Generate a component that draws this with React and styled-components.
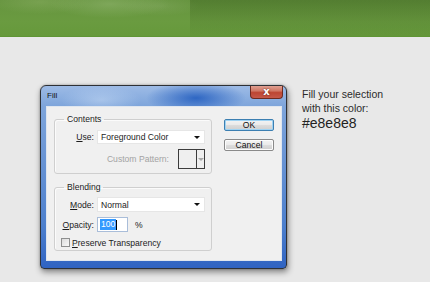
import React from "react";
import styled, { createGlobalStyle } from "styled-components";

const Global = createGlobalStyle`
  html, body { margin: 0; padding: 0; background: #e8e8e8; }
  body { font-family: "Liberation Sans", Arial, sans-serif; }
`;

const Page = styled.div`
  width: 430px;
  height: 282px;
  background: #e8e8e8;
  overflow: hidden;
`;

const Header = styled.div`
  height: 37px;
  border-bottom: 1px solid #5f9535;
  box-sizing: border-box;
  background:
    linear-gradient(to bottom, rgba(25, 55, 5, 0.24), rgba(25, 55, 5, 0.1) 60%, rgba(25, 55, 5, 0.03)) 190px 0 / 240px 100% no-repeat,
    radial-gradient(ellipse 60px 14px at 110px 4px, rgba(170, 200, 140, 0.35), transparent),
    radial-gradient(ellipse 50px 12px at 40px 2px, rgba(160, 190, 120, 0.3), transparent),
    radial-gradient(ellipse 40px 10px at 160px 6px, rgba(150, 180, 120, 0.25), transparent),
    linear-gradient(to bottom, #66943f 0%, #6a9b40 60%, #66993b 100%);
`;

const Stage = styled.div`
  display: flex;
  align-items: flex-start;
  padding: 48px 0 0 40px;
`;

const Window = styled.div`
  width: 247px;
  box-sizing: border-box;
  border: 1px solid #2e3136;
  border-radius: 6px 6px 4px 4px;
  padding: 0 4px 7px 5px;
  box-shadow: 1px 3px 6px rgba(0, 0, 0, 0.45), 0 0 2px rgba(0, 0, 0, 0.3);
  background:
    radial-gradient(ellipse 50px 16px at 155px 12px, rgba(30, 90, 190, 0.85), transparent),
    radial-gradient(ellipse 40px 14px at 60px 14px, rgba(200, 220, 245, 0.5), transparent),
    linear-gradient(to bottom, #9dbbe6 0px, #7ea5db 20px, #6e98d6 60px, #4c7fcd 140px, #2f63c2 100%);
`;

const TitleBar = styled.div`
  height: 20px;
  display: flex;
  justify-content: space-between;
  align-items: flex-start;
  padding: 0 0 0 1px;
`;

const Title = styled.span`
  font-size: 8px;
  line-height: 19px;
  color: #141414;
  font-family: "Liberation Sans", Arial, sans-serif;
`;

const CloseButton = styled.div`
  width: 33px;
  height: 13px;
  margin-right: -1px;
  box-sizing: border-box;
  border: 1px solid #6d2a20;
  border-top: none;
  border-radius: 0 0 4px 4px;
  background: linear-gradient(to bottom, #e0a092 0%, #d07866 40%, #bd4633 55%, #c5594a 100%);
  color: #fff;
  font-size: 10px;
  font-weight: bold;
  line-height: 11px;
  text-align: center;
  text-shadow: 0 0 2px #5a1a10;
  font-family: "DejaVu Sans", sans-serif;
`;

const Client = styled.div`
  box-sizing: border-box;
  height: 155px;
  border: 1px solid #dfe6ef;
  background: #f0f0f0;
  display: flex;
  gap: 12px;
  padding: 7px 7px 0 7px;
  font-size: 8.6px;
  color: #1c1c1c;
`;

const Groups = styled.div`
  display: flex;
  flex-direction: column;
  gap: 8px;
  width: 158px;
`;

const Group = styled.fieldset`
  margin: 0;
  padding: ${(p) => p.$pad};
  border: 1px solid #cfcfcf;
  border-radius: 3px;
  box-shadow: inset 1px 1px 0 #fbfbfb;
  min-width: 0;
  box-sizing: border-box;
  display: flex;
  flex-direction: column;
`;

const Legend = styled.legend`
  padding: 0 3px;
  margin-left: 3px;
  font-size: 8.6px;
  line-height: 10px;
  color: #1c1c1c;
`;

const FieldRow = styled.div`
  display: grid;
  grid-template-columns: 33px 1fr;
  column-gap: 3px;
  align-items: center;
  height: ${(p) => p.$h}px;
  margin-top: ${(p) => p.$mt || 0}px;
`;

const Label = styled.span`
  text-align: right;
  white-space: nowrap;
  color: ${(p) => (p.$disabled ? "#a3a3a3" : "#1c1c1c")};
`;

const Select = styled.div`
  height: 100%;
  box-sizing: border-box;
  background: #fff;
  border: 1px solid #e6e6e6;
  display: flex;
  align-items: center;
  justify-content: space-between;
  padding: 0 4px 0 3px;
`;

const Arrow = styled.span`
  width: 0;
  height: 0;
  border-left: 3px solid transparent;
  border-right: 3px solid transparent;
  border-top: 3px solid ${(p) => p.$color || "#111"};
`;

const PatternRow = styled.div`
  display: flex;
  justify-content: flex-end;
  align-items: center;
  gap: 9px;
  height: 20px;
  margin-top: 5px;
`;

const PatternBox = styled.div`
  width: 27px;
  height: 20px;
  box-sizing: border-box;
  border: 1px solid #3c3c3c;
  display: flex;
  background: #efefef;
`;

const PatternSwatch = styled.div`
  flex: 1;
  border-right: 1px solid #3c3c3c;
`;

const PatternDrop = styled.div`
  width: 7px;
  display: flex;
  align-items: center;
  justify-content: center;
`;

const InlineRow = styled.div`
  display: flex;
  align-items: center;
  gap: ${(p) => p.$gap}px;
`;

const NumberInput = styled.div`
  width: 31px;
  height: 15px;
  box-sizing: border-box;
  border: 1px solid #a9bdd9;
  background: #fff;
  display: flex;
  align-items: center;
  padding-left: 2px;
`;

const Selected = styled.span`
  background: #3399ff;
  color: #fff;
  line-height: 11px;
  padding: 0 1px;
`;

const Caret = styled.span`
  width: 1px;
  height: 10px;
  background: #000;
`;

const CheckRow = styled.div`
  display: flex;
  align-items: center;
  gap: 2px;
  height: 9px;
  margin-top: 6px;
`;

const Checkbox = styled.span`
  width: 9px;
  height: 9px;
  box-sizing: border-box;
  border: 1px solid #8e8f8f;
  background: linear-gradient(135deg, #dcdcdc, #f8f8f8);
`;

const Buttons = styled.div`
  display: flex;
  flex-direction: column;
  gap: 8px;
  padding-top: 5px;
  width: 50px;
`;

const Button = styled.div`
  height: 12px;
  box-sizing: border-box;
  border: 1px solid ${(p) => (p.$default ? "#3c7fb1" : "#8a8a8a")};
  border-radius: 2px;
  background: linear-gradient(to bottom, #f4f4f4 0%, #ebebeb 45%, #dddddd 50%, #cfcfcf 100%);
  box-shadow: inset 0 0 0 1px ${(p) => (p.$default ? "#9fd3f3" : "#fcfcfc")};
  font-size: 8.6px;
  line-height: 10px;
  text-align: center;
  color: #111;
`;

const Note = styled.div`
  margin: 2px 0 0 15px;
  color: #2b2b2b;
  font-family: "Liberation Sans", Arial, sans-serif;
`;

const NoteText = styled.div`
  font-size: 10.5px;
  line-height: 14px;
`;

const NoteColor = styled.div`
  font-size: 14px;
  line-height: 16px;
  color: #222;
`;

export default function App() {
  return (
    <Page>
      <Global />
      <Header />
      <Stage>
        <Window>
          <TitleBar>
            <Title>Fill</Title>
            <CloseButton>x</CloseButton>
          </TitleBar>
          <Client>
            <Groups>
              <Group $pad="0 6px 4px 6px">
                <Legend>Contents</Legend>
                <FieldRow $h={14} $mt={6}>
                  <Label>
                    <u>U</u>se:
                  </Label>
                  <Select>
                    <span>Foreground Color</span>
                    <Arrow />
                  </Select>
                </FieldRow>
                <PatternRow>
                  <Label $disabled>Custom Pattern:</Label>
                  <PatternBox>
                    <PatternSwatch />
                    <PatternDrop>
                      <Arrow $color="#a8a8a8" />
                    </PatternDrop>
                  </PatternBox>
                </PatternRow>
              </Group>
              <Group $pad="0 6px 3px 6px">
                <Legend>Blending</Legend>
                <FieldRow $h={15} $mt={5}>
                  <Label>
                    <u>M</u>ode:
                  </Label>
                  <Select>
                    <span>Normal</span>
                    <Arrow />
                  </Select>
                </FieldRow>
                <FieldRow $h={15} $mt={5}>
                  <Label>
                    <u>O</u>pacity:
                  </Label>
                  <InlineRow $gap={7}>
                    <NumberInput>
                      <Selected>100</Selected>
                      <Caret />
                    </NumberInput>
                    <span>%</span>
                  </InlineRow>
                </FieldRow>
                <CheckRow>
                  <Checkbox />
                  <span>
                    <u>P</u>reserve Transparency
                  </span>
                </CheckRow>
              </Group>
            </Groups>
            <Buttons>
              <Button $default>OK</Button>
              <Button>Cancel</Button>
            </Buttons>
          </Client>
        </Window>
        <Note>
          <NoteText>Fill your selection</NoteText>
          <NoteText>with this color:</NoteText>
          <NoteColor>#e8e8e8</NoteColor>
        </Note>
      </Stage>
    </Page>
  );
}
